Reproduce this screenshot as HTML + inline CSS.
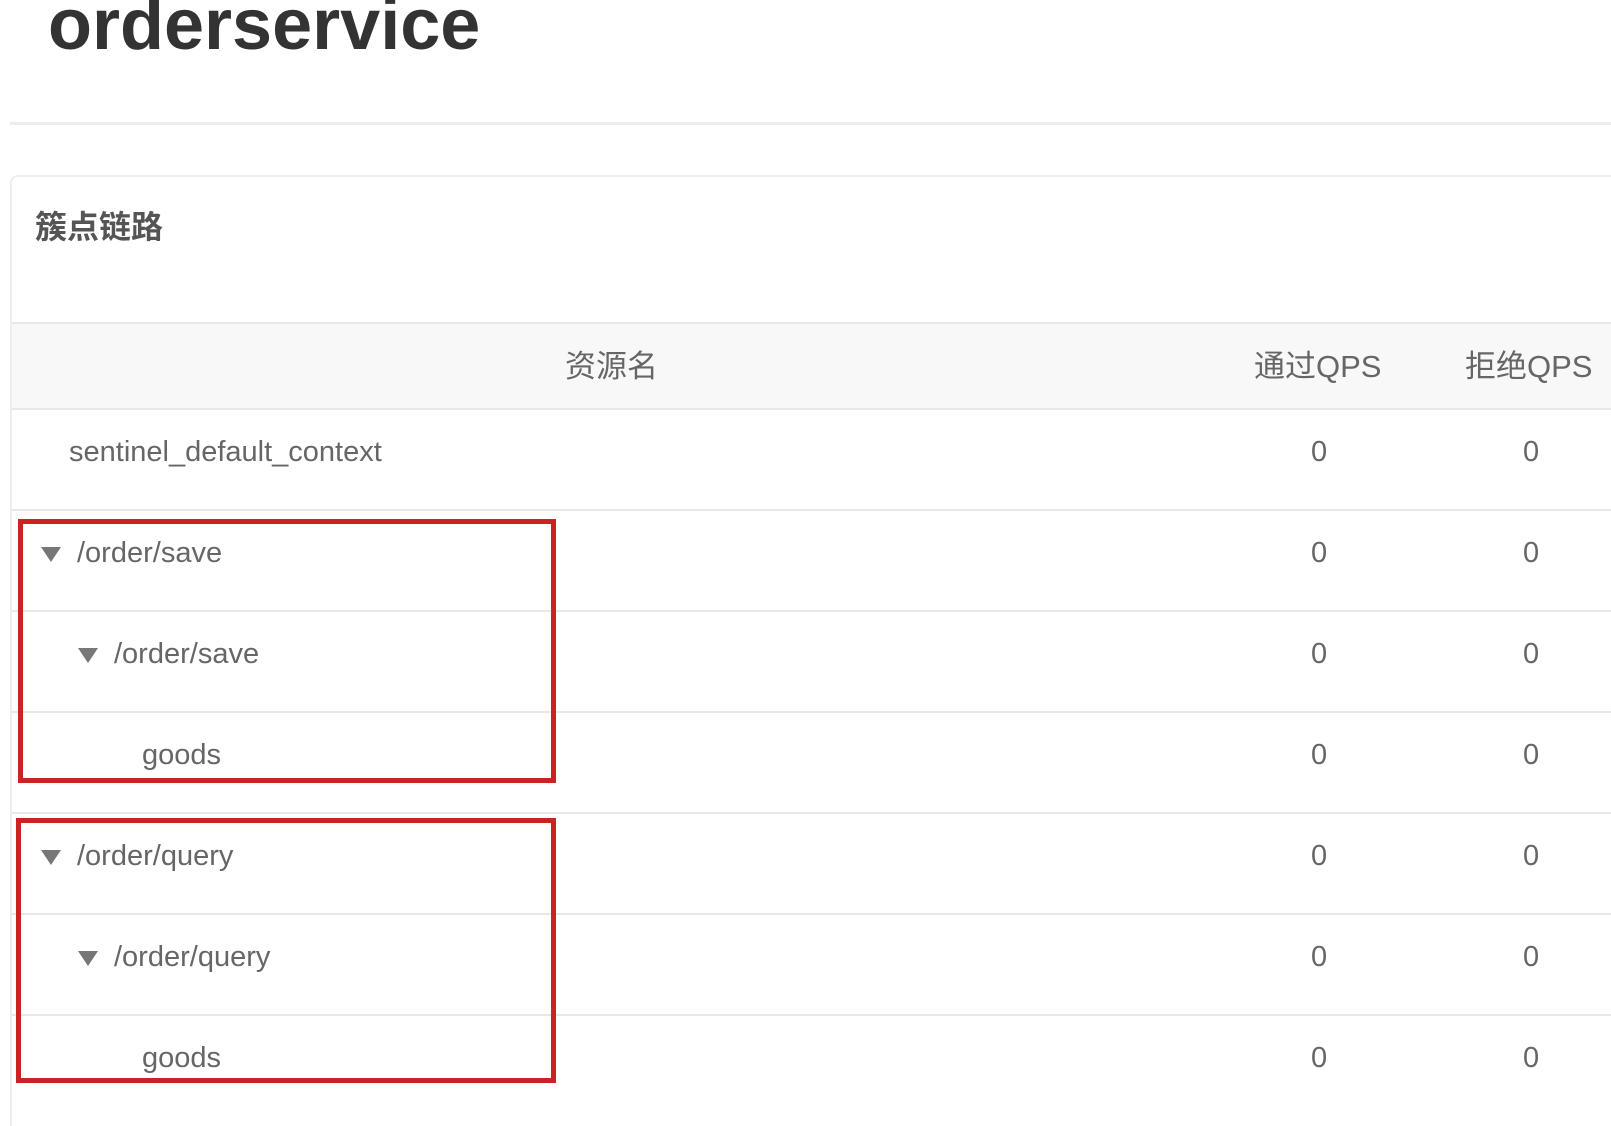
<!DOCTYPE html>
<html><head><meta charset="utf-8"><style>
html,body{margin:0;padding:0;background:#fff;width:1611px;height:1126px;overflow:hidden;font-family:"Liberation Sans","Noto Sans CJK SC",sans-serif;color:#666;}
body{position:relative}
.title{position:absolute;left:48px;top:-16px;font-size:72px;font-weight:bold;color:#333;}
.hr{position:absolute;left:10px;right:0;top:122px;height:3px;background:#eee}
.panel{position:absolute;left:10px;top:175px;width:1640px;height:951px;border:2px solid #eee;border-bottom:none;border-radius:8px 8px 0 0;box-sizing:border-box}
.ptitle{position:absolute;left:35px;top:202px;font-size:32px;color:#555;font-weight:bold}
.row{position:absolute;left:12px;width:1599px;border-top:2px solid #e8e8e8;font-size:29px;}
.hdr{background:#f8f8f8;font-size:31px}
.c{position:absolute;top:0;bottom:14px;display:flex;align-items:center}
.hdr .c{bottom:6px}
.tri{display:inline-block;width:0;height:0;border-left:10px solid transparent;border-right:10px solid transparent;border-top:15px solid #777;position:absolute}
.box{position:absolute;border:5px solid #cc2222}
</style></head><body>
<div class="title">orderservice</div>
<div class="hr"></div>
<div class="panel"></div>
<div class="ptitle">簇点链路</div>

<div class="row hdr" style="top:322px;height:85px">
 <div class="c" style="left:553px">资源名</div>
 <div class="c" style="left:1242px">通过QPS</div>
 <div class="c" style="left:1453px">拒绝QPS</div>
</div>

<div class="row" style="top:408px;height:99px"><div class="c" style="left:57px">sentinel_default_context</div><div class="c" style="left:1299px">0</div><div class="c" style="left:1511px">0</div></div>
<div class="row" style="top:509px;height:99px"><span class="tri" style="left:29px;top:36px"></span><div class="c" style="left:65px">/order/save</div><div class="c" style="left:1299px">0</div><div class="c" style="left:1511px">0</div></div>
<div class="row" style="top:610px;height:99px"><span class="tri" style="left:66px;top:36px"></span><div class="c" style="left:102px">/order/save</div><div class="c" style="left:1299px">0</div><div class="c" style="left:1511px">0</div></div>
<div class="row" style="top:711px;height:99px"><div class="c" style="left:130px">goods</div><div class="c" style="left:1299px">0</div><div class="c" style="left:1511px">0</div></div>
<div class="row" style="top:812px;height:99px"><span class="tri" style="left:29px;top:36px"></span><div class="c" style="left:65px">/order/query</div><div class="c" style="left:1299px">0</div><div class="c" style="left:1511px">0</div></div>
<div class="row" style="top:913px;height:99px"><span class="tri" style="left:66px;top:36px"></span><div class="c" style="left:102px">/order/query</div><div class="c" style="left:1299px">0</div><div class="c" style="left:1511px">0</div></div>
<div class="row" style="top:1014px;height:99px"><div class="c" style="left:130px">goods</div><div class="c" style="left:1299px">0</div><div class="c" style="left:1511px">0</div></div>

<div class="box" style="left:18px;top:519px;width:528px;height:254px"></div>
<div class="box" style="left:16px;top:818px;width:530px;height:255px"></div>
</body></html>
